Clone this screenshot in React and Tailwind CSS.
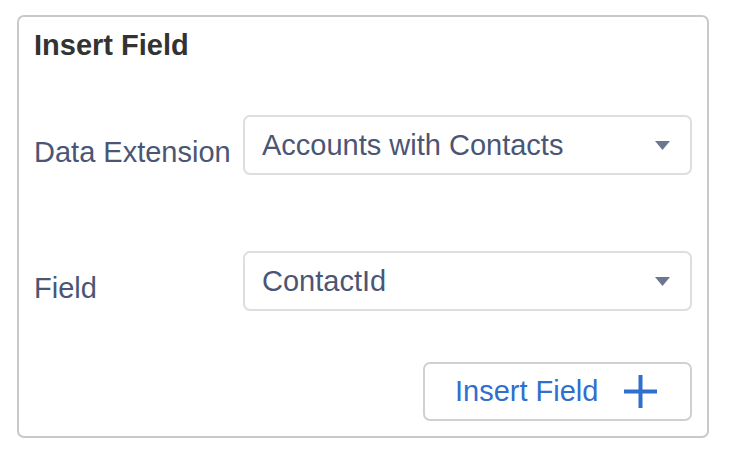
import React from 'react';

function Caret() {
  return (
    <svg width="15" height="9" viewBox="0 0 15 9" className="shrink-0">
      <path d="M0 0 H15 L7.5 9 Z" fill="#6b7691" />
    </svg>
  );
}

function Select({ value }) {
  return (
    <div className="w-[449px] h-[60px] border-2 border-[#dedede] rounded-[7px] pl-[17px] pr-[20px] flex items-center justify-between bg-white">
      <span className="text-[29px] leading-[29px] text-[#4a5674]">{value}</span>
      <Caret />
    </div>
  );
}

function Row({ label, value, className = '' }) {
  return (
    <div className={`flex items-start ${className}`}>
      <div className="w-[209px] pt-[23px] text-[29px] leading-[29px] text-[#4a5674]">{label}</div>
      <Select value={value} />
    </div>
  );
}

export default function App() {
  return (
    <div className="w-[732px] h-[454px] bg-white pt-[15px] pl-[17px]" style={{ fontFamily: '"Liberation Sans", Arial, sans-serif' }}>
      <div className="w-[692px] h-[423px] border-2 border-[#c9c9c9] rounded-[7px] pt-[14px] px-[15px] flex flex-col">
        <div className="h-[29px] text-[29px] leading-[29px] font-bold text-[#333333]">Insert Field</div>

        <Row label="Data Extension" value="Accounts with Contacts" className="mt-[55px]" />
        <Row label="Field" value="ContactId" className="mt-[76px]" />

        <div className="mt-[51px] flex justify-end">
          <button
            type="button"
            className="w-[269px] h-[59px] border-2 border-[#d0d0d0] rounded-[7px] pl-[30px] flex items-center bg-white text-[#2f6fcd]"
          >
            <span className="text-[29px] leading-[29px]">Insert Field</span>
            <svg width="33" height="33" viewBox="0 0 33 33" className="ml-[26px]">
              <path d="M16.5 0 V33 M0 16.5 H33" stroke="#2f6fcd" strokeWidth="4" />
            </svg>
          </button>
        </div>
      </div>
    </div>
  );
}
